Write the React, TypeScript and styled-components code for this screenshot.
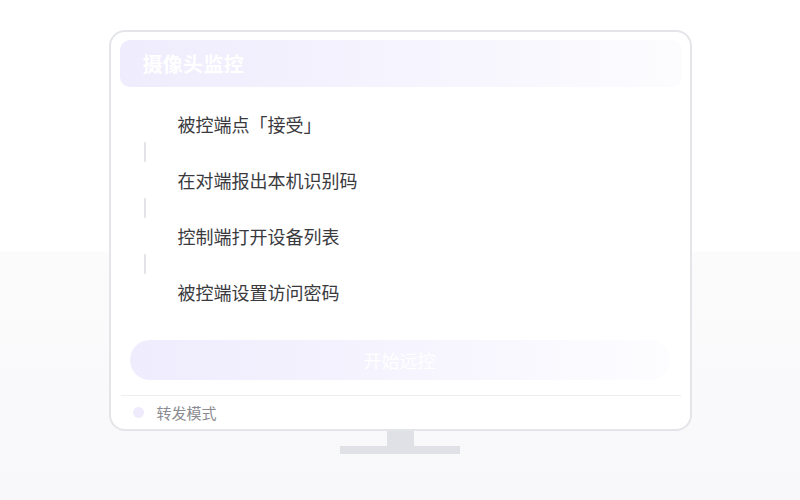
import React from "react";
import styled, { createGlobalStyle } from "styled-components";

const Global = createGlobalStyle`
  html, body { margin: 0; padding: 0; }
  body {
    width: 800px;
    height: 500px;
    overflow: hidden;
    font-family: "Noto Sans CJK SC", "Noto Sans", sans-serif;
    background: linear-gradient(180deg, #ffffff 0px, #ffffff 251px, #fbfbfc 252px, #f8f8fa 500px);
  }
`;

const Page = styled.div`
  width: 800px;
  height: 500px;
  display: flex;
  flex-direction: column;
  align-items: center;
  padding-top: 30px;
  box-sizing: border-box;
`;

const Monitor = styled.div`
  width: 583px;
  height: 401px;
  box-sizing: border-box;
  border: 2px solid #e3e5e9;
  border-radius: 16px;
  background: #ffffff;
  padding: 8px 8px 0 9px;
  display: flex;
  flex-direction: column;
`;

const Header = styled.div`
  height: 47px;
  border-radius: 10px;
  background: linear-gradient(90deg, #efecfd 0%, #f5f3fe 45%, #fcfcfe 100%);
  display: flex;
  align-items: center;
  padding-left: 23px;
  color: #ffffff;
  font-size: 20px;
  font-weight: 700;
  letter-spacing: 0.3px;
`;

const Steps = styled.div`
  display: flex;
  flex-direction: column;
  margin-top: 20px;
`;

const Step = styled.div`
  height: 34px;
  line-height: 34px;
  padding-left: 58px;
  font-size: 18px;
  color: #3a3a3e;
`;

const Connector = styled.div`
  width: 2px;
  height: 20px;
  margin: 1px 0 1px 24px;
  background: #e2e3e8;
  border-radius: 1px;
`;

const StartButton = styled.div`
  margin: 31px 12px 0 10px;
  height: 40px;
  border-radius: 20px;
  background: linear-gradient(90deg, #efecfd 0%, #f5f3fe 45%, #fdfdff 100%);
  color: #ffffff;
  font-size: 18px;
  display: flex;
  align-items: center;
  justify-content: center;
`;

const Divider = styled.div`
  margin: 15px 1px 0 1px;
  height: 1px;
  background: #eceef1;
`;

const Footer = styled.div`
  flex: 1;
  display: flex;
  align-items: center;
  padding-left: 13px;
  gap: 13px;
  font-size: 15px;
  color: #8b8b92;
`;

const Dot = styled.span`
  width: 11px;
  height: 11px;
  border-radius: 50%;
  background: #efebfd;
`;

const Neck = styled.div`
  width: 27px;
  height: 15px;
  background: #dfe1e6;
`;

const Base = styled.div`
  width: 120px;
  height: 8px;
  background: #dfe1e6;
`;

const steps = [
  "被控端点「接受」",
  "在对端报出本机识别码",
  "控制端打开设备列表",
  "被控端设置访问密码",
];

export default function App() {
  return (
    <>
      <Global />
      <Page>
        <Monitor>
          <Header>摄像头监控</Header>
          <Steps>
            {steps.map((s, i) => (
              <React.Fragment key={s}>
                {i > 0 && <Connector />}
                <Step>{s}</Step>
              </React.Fragment>
            ))}
          </Steps>
          <StartButton>开始远控</StartButton>
          <Divider />
          <Footer>
            <Dot />
            转发模式
          </Footer>
        </Monitor>
        <Neck />
        <Base />
      </Page>
    </>
  );
}
